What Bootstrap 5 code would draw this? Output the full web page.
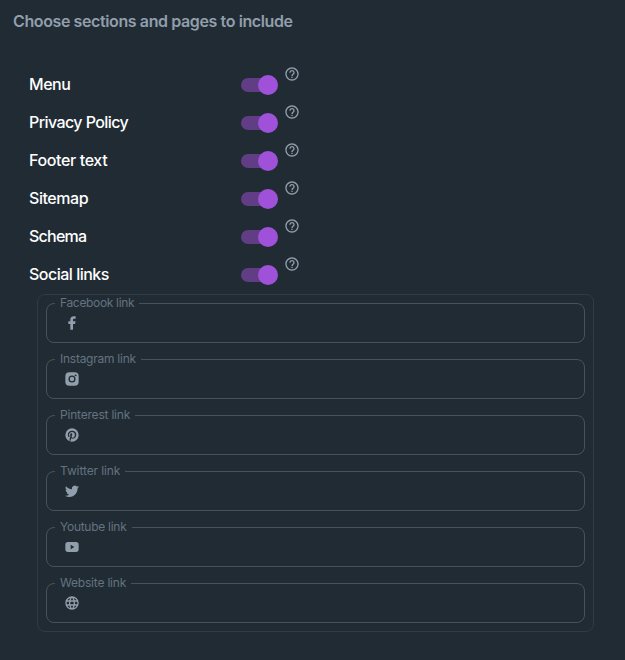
<!DOCTYPE html>
<html lang="en">
<head>
<meta charset="utf-8">
<meta name="viewport" content="width=device-width, initial-scale=1">
<title>Sections and pages</title>
<link href="https://cdn.jsdelivr.net/npm/bootstrap@5.3.0/dist/css/bootstrap.min.css" rel="stylesheet">
<style>
body{background:#212b34;color:#fff;font-family:Inter,"Noto Sans",sans-serif;height:660px;overflow:hidden}
.page-title{font-size:16px;line-height:24px;font-weight:600;color:#919eab;padding:9px 0 0 13px;letter-spacing:-.39px}
.options{padding:33px 0 0 29px}
.option{height:38px}
.option-name{width:212px;font-size:16px;line-height:24px;font-weight:500;letter-spacing:-.45px;padding-bottom:2px}
.option:nth-child(2) .option-name{letter-spacing:-.58px}
.option:nth-child(3) .option-name{letter-spacing:-.37px}
.option:nth-child(5) .option-name{letter-spacing:-.75px}
.option:nth-child(6) .option-name{letter-spacing:-.5px}
.toggle{width:37px;height:20px}
.toggle-track{width:34px;height:14px;border-radius:7px;background:#613d86}
.toggle-thumb{width:20px;height:20px;border-radius:50%;background:#9f52d9;margin-left:-17px}
.help{width:16px;height:16px;margin:-22px 0 0 6px;fill:#919eab}
.links{margin:0 31px 0 37px;padding:8px;border:1px solid #303b45;border-radius:8px;gap:16px}
.field{height:40px;border:1px solid #46535d;border-radius:8px;padding-left:17px}
.field-label{left:8px;top:-8px;padding:0 5px;font-size:12px;line-height:14px;letter-spacing:-.2px;color:#637381;background:#212b34;white-space:nowrap}
.field:nth-child(1) .field-label{letter-spacing:-.33px}
.field:nth-child(2) .field-label{letter-spacing:-.25px}
.field:nth-child(4) .field-label{letter-spacing:-.1px}
.field:nth-child(5) .field-label{letter-spacing:-.27px}
.field svg{width:16px;height:16px;fill:#919eab}
</style>
<script src="https://cdn.jsdelivr.net/npm/bootstrap@5.3.0/dist/js/bootstrap.bundle.min.js"></script>
</head>
<body>
<svg class="d-none"><symbol id="help" viewBox="0 0 24 24"><path d="M11 18h2v-2h-2zm1-16C6.48 2 2 6.48 2 12s4.480 10 10 10 10-4.480 10-10S17.520 2 12 2m0 18c-4.410 0-8-3.590-8-8s3.590-8 8-8 8 3.590 8 8-3.590 8-8 8m0-14c-2.210 0-4 1.790-4 4h2c0-1.100.9-2 2-2s2 .9 2 2c0 2-3 1.750-3 5h2c0-2.250 3-2.500 3-5 0-2.210-1.790-4-4-4"/></symbol></svg>
<h1 class="page-title m-0">Choose sections and pages to include</h1>
<main>
<div class="options">
<div class="option d-flex align-items-center"><span class="option-name">Menu</span><div class="toggle d-flex align-items-center"><span class="toggle-track flex-shrink-0"></span><span class="toggle-thumb flex-shrink-0"></span></div><svg class="help"><use href="#help"/></svg></div>
<div class="option d-flex align-items-center"><span class="option-name">Privacy Policy</span><div class="toggle d-flex align-items-center"><span class="toggle-track flex-shrink-0"></span><span class="toggle-thumb flex-shrink-0"></span></div><svg class="help"><use href="#help"/></svg></div>
<div class="option d-flex align-items-center"><span class="option-name">Footer text</span><div class="toggle d-flex align-items-center"><span class="toggle-track flex-shrink-0"></span><span class="toggle-thumb flex-shrink-0"></span></div><svg class="help"><use href="#help"/></svg></div>
<div class="option d-flex align-items-center"><span class="option-name">Sitemap</span><div class="toggle d-flex align-items-center"><span class="toggle-track flex-shrink-0"></span><span class="toggle-thumb flex-shrink-0"></span></div><svg class="help"><use href="#help"/></svg></div>
<div class="option d-flex align-items-center"><span class="option-name">Schema</span><div class="toggle d-flex align-items-center"><span class="toggle-track flex-shrink-0"></span><span class="toggle-thumb flex-shrink-0"></span></div><svg class="help"><use href="#help"/></svg></div>
<div class="option d-flex align-items-center"><span class="option-name">Social links</span><div class="toggle d-flex align-items-center"><span class="toggle-track flex-shrink-0"></span><span class="toggle-thumb flex-shrink-0"></span></div><svg class="help"><use href="#help"/></svg></div>
</div>
<div class="links d-flex flex-column">
<div class="field position-relative d-flex align-items-center"><label class="field-label position-absolute">Facebook link</label><svg viewBox="0 0 24 24"><path d="M13.500 13.500h3l1-4h-4v-2c0-1.100 0-2 2-2h2V2.140C17.170 2.100 15.930 2 14.620 2 11.770 2 9.500 3.660 9.500 6.700v2.800h-3v4h3V22h4z"/></svg></div>
<div class="field position-relative d-flex align-items-center"><label class="field-label position-absolute">Instagram link</label><svg viewBox="0 0 24 24"><path fill-rule="evenodd" d="M8 2h8a6 6 0 0 1 6 6v8a6 6 0 0 1-6 6H8a6 6 0 0 1-6-6V8a6 6 0 0 1 6-6m4 4.700a5.300 5.300 0 1 0 0 10.600 5.300 5.300 0 0 0 0-10.600m0 2a3.300 3.300 0 1 1 0 6.600 3.300 3.300 0 0 1 0-6.600m5.500-3.600a1.400 1.400 0 1 0 0 2.800 1.400 1.400 0 0 0 0-2.800"/></svg></div>
<div class="field position-relative d-flex align-items-center"><label class="field-label position-absolute">Pinterest link</label><svg viewBox="0 0 24 24"><path d="M9.040 21.540c.96.290 1.930.46 2.960.46a10 10 0 0 0 10-10A10 10 0 0 0 12 2 10 10 0 0 0 2 12c0 4.250 2.670 7.900 6.440 9.340-.09-.78-.18-2.070 0-2.960l1.150-4.940s-.29-.58-.29-1.500c0-1.380.86-2.410 1.840-2.410.86 0 1.260.63 1.260 1.440 0 .86-.57 2.090-.86 3.270-.17.980.52 1.840 1.520 1.840 1.780 0 3.160-1.900 3.160-4.580 0-2.400-1.720-4.040-4.190-4.040-2.820 0-4.480 2.100-4.480 4.310 0 .86.280 1.730.74 2.300.09.060.09.140.06.290l-.29 1.090c0 .17-.11.230-.28.110-1.280-.56-2.020-2.380-2.020-3.850 0-3.160 2.240-6.030 6.560-6.030 3.440 0 6.120 2.470 6.120 5.750 0 3.440-2.130 6.200-5.180 6.200-.97 0-1.920-.52-2.260-1.130l-.67 2.370c-.23.860-.86 2.010-1.290 2.700z"/></svg></div>
<div class="field position-relative d-flex align-items-center"><label class="field-label position-absolute">Twitter link</label><svg viewBox="0 0 24 24"><path d="M22.460 6c-.77.350-1.600.58-2.460.69a4.300 4.300 0 0 0 1.880-2.380c-.83.500-1.750.85-2.720 1.050A4.280 4.280 0 0 0 11.860 9.250C8.280 9.090 5.110 7.380 3 4.790a4.260 4.260 0 0 0 1.330 5.710c-.71 0-1.370-.2-1.950-.5v.03c0 2.070 1.480 3.810 3.440 4.200a4.200 4.200 0 0 1-1.930.07 4.280 4.280 0 0 0 4 2.980A8.520 8.520 0 0 1 1.550 19a12.070 12.070 0 0 0 6.560 1.920c7.880 0 12.210-6.540 12.210-12.210 0-.19 0-.37-.01-.56.84-.6 1.560-1.360 2.150-2.150"/></svg></div>
<div class="field position-relative d-flex align-items-center"><label class="field-label position-absolute">Youtube link</label><svg viewBox="0 0 24 24"><path fill-rule="evenodd" d="M6 4.500h12a4 4 0 0 1 4 4v7a4 4 0 0 1-4 4H6a4 4 0 0 1-4-4v-7a4 4 0 0 1 4-4m4 4.300v6.400l5.500-3.200z"/></svg></div>
<div class="field position-relative d-flex align-items-center"><label class="field-label position-absolute">Website link</label><svg viewBox="0 0 24 24"><path d="M11.990 2C6.470 2 2 6.480 2 12s4.470 10 9.990 10C17.520 22 22 17.520 22 12S17.520 2 11.990 2m6.930 6h-2.950c-.32-1.250-.78-2.450-1.380-3.560 1.840.63 3.370 1.910 4.330 3.560M12 4.040c.83 1.200 1.480 2.530 1.910 3.960h-3.820c.43-1.430 1.080-2.760 1.910-3.960M4.260 14C4.100 13.360 4 12.690 4 12s.1-1.360.26-2h3.380c-.08.660-.14 1.320-.14 2s.06 1.340.14 2zm.82 2h2.950c.32 1.250.78 2.450 1.380 3.560-1.840-.63-3.370-1.900-4.330-3.560m2.950-8H5.080c.96-1.660 2.490-2.930 4.330-3.560C8.810 5.550 8.350 6.750 8.030 8M12 19.960c-.83-1.200-1.480-2.530-1.910-3.960h3.820c-.43 1.430-1.080 2.760-1.910 3.960M14.340 14H9.660c-.09-.66-.16-1.320-.16-2s.07-1.350.16-2h4.680c.09.650.16 1.320.16 2s-.07 1.340-.16 2m.25 5.560c.6-1.110 1.060-2.310 1.380-3.560h2.950c-.96 1.650-2.490 2.930-4.330 3.560M16.360 14c.08-.66.14-1.320.14-2s-.06-1.340-.14-2h3.380c.16.640.26 1.310.26 2s-.1 1.360-.26 2z"/></svg></div>
</div>
</main>
</body>
</html>
